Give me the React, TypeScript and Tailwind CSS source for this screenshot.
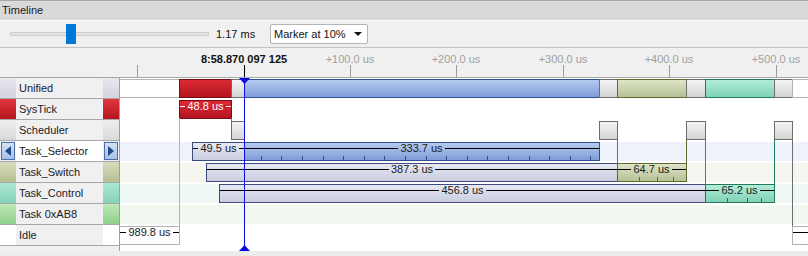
import type { ReactNode } from "react";

const X0 = 120; // chart area starts here (page x)

type Row = { name: string; swatch: string; cell?: string; arrows?: boolean; band?: string };

const ROWS: Row[] = [
  { name: "Unified", swatch: "bg-gradient-to-b from-[#e8e8ef] to-[#d3d3dd]" },
  { name: "SysTick", swatch: "bg-gradient-to-b from-[#e2353f] to-[#b5151e]" },
  { name: "Scheduler", swatch: "bg-gradient-to-b from-[#eeeeee] to-[#d9d9d9]" },
  { name: "Task_Selector", swatch: "bg-[#eef2fa]", cell: "bg-white", arrows: true, band: "bg-[#eef2fa]" },
  { name: "Task_Switch", swatch: "bg-gradient-to-b from-[#d7ddbd] to-[#b5bf93]", band: "bg-[#f5f6f0]" },
  { name: "Task_Control", swatch: "bg-gradient-to-b from-[#ade7d5] to-[#84d2b8]", band: "bg-[#eef8f4]" },
  { name: "Task 0xAB8", swatch: "bg-gradient-to-b from-[#bfe9b8] to-[#8fd08b]", band: "bg-[#f1f8ef]" },
  { name: "Idle", swatch: "bg-white" },
];

const C = {
  blue: "bg-gradient-to-b from-[#b6caee] to-[#7f9dd9] border-[#2f4f8f]",
  ready: "bg-gradient-to-b from-[#e7e8f1] to-[#c9cde0] border-[#3d4a7d]",
  red: "bg-gradient-to-b from-[#dd2a35] to-[#b3141f] border-[#7a0e16]",
  gray: "bg-gradient-to-b from-[#f4f4f4] to-[#d5d5d5] border-[#6e6e6e]",
  olive: "bg-gradient-to-b from-[#dee4c8] to-[#b6c195] border-[#5f6a2e]",
  teal: "bg-gradient-to-b from-[#b2edd9] to-[#80d2b6] border-[#1f7a5a]",
  idle: "bg-white border-[#b4b4b4]",
};

function Box({ l, r, cls }: { l: number; r: number; cls: string }) {
  return (
    <div
      className={`absolute top-[1px] h-[19px] border ${cls}`}
      style={{ left: l - X0, width: r - l + 1 }}
    />
  );
}

function Span({ l, r, text, white }: { l: number; r: number; text: string; white?: boolean }) {
  const line = white ? "bg-white" : "bg-black";
  return (
    <div
      className={`absolute top-[1px] flex h-[13px] items-center ${white ? "text-white" : "text-[#1a1a1a]"}`}
      style={{ left: l - X0, width: r - l }}
    >
      <div className={`h-px flex-1 ${line}`} />
      <span className="px-[2px] leading-[13px]">{text}</span>
      <div className={`h-px flex-1 ${line}`} />
    </div>
  );
}

function Ticks({ xs, cls }: { xs: number[]; cls: string }) {
  return (
    <>
      {xs.map((x) => (
        <div key={x} className={`absolute top-[15px] h-[4px] w-px ${cls}`} style={{ left: Math.round(x) - X0 }} />
      ))}
    </>
  );
}

function VLine({ x, y1, y2, cls }: { x: number; y1: number; y2: number; cls: string }) {
  return <div className={`absolute w-px ${cls}`} style={{ left: x - X0, top: y1, height: y2 - y1 }} />;
}

const blueTicks = Array.from({ length: 17 }, (_, i) => 260.7 + i * 20.6);

const rowContent: ReactNode[] = [
  <>
    <Box l={100} r={179} cls={C.idle} />
    <Box l={179} r={231} cls={C.red} />
    <Box l={231} r={244} cls={C.gray} />
    <Box l={244} r={599} cls={C.blue} />
    <Box l={599} r={617} cls={C.gray} />
    <Box l={617} r={686} cls={C.olive} />
    <Box l={686} r={705} cls={C.gray} />
    <Box l={705} r={774} cls={C.teal} />
    <Box l={774} r={792} cls={C.gray} />
    <Box l={792} r={830} cls={C.idle} />
  </>,
  <>
    <Box l={179} r={231} cls={C.red} />
    <Span l={180} r={231} text="48.8 us" white />
  </>,
  <>
    <Box l={231} r={244} cls={C.gray} />
    <Box l={599} r={617} cls={C.gray} />
    <Box l={686} r={705} cls={C.gray} />
    <Box l={774} r={792} cls={C.gray} />
  </>,
  <>
    <Box l={192} r={244} cls={C.ready} />
    <Box l={244} r={599} cls={C.blue} />
    <Ticks xs={blueTicks} cls="bg-[#2f4f8f]" />
    <Span l={193} r={244} text="49.5 us" />
    <Span l={244} r={599} text="333.7 us" />
  </>,
  <>
    <Box l={206} r={617} cls={C.ready} />
    <Box l={617} r={686} cls={C.olive} />
    <Ticks xs={[639, 657, 673]} cls="bg-[#5f6a2e]" />
    <Span l={207} r={617} text="387.3 us" />
    <Span l={617} r={686} text="64.7 us" />
  </>,
  <>
    <Box l={219} r={705} cls={C.ready} />
    <Box l={705} r={774} cls={C.teal} />
    <Ticks xs={[727, 747, 761]} cls="bg-[#1f7a5a]" />
    <Span l={220} r={705} text="456.8 us" />
    <Span l={705} r={774} text="65.2 us" />
  </>,
  null,
  <>
    <Box l={100} r={179} cls={C.idle} />
    <Span l={120} r={179} text="989.8 us" />
    <Box l={792} r={830} cls={C.idle} />
    <Span l={793} r={830} text="" />
  </>,
];

const rulerLabels = [
  { x: 350, t: "+100.0 us" },
  { x: 456, t: "+200.0 us" },
  { x: 563, t: "+300.0 us" },
  { x: 669, t: "+400.0 us" },
  { x: 776, t: "+500.0 us" },
];

function Arrow({ dir }: { dir: "l" | "r" }) {
  return (
    <div className="flex h-[18px] w-[14px] items-center justify-center border border-[#4a6fa8] bg-gradient-to-b from-[#d6e2f5] to-[#a9c0e6]">
      <svg width="6" height="10" viewBox="0 0 6 10">
        <path d={dir === "l" ? "M6 0 L0 5 L6 10 Z" : "M0 0 L6 5 L0 10 Z"} fill="#1f4a8f" />
      </svg>
    </div>
  );
}

export default function App() {
  return (
    <div className="h-[256px] w-[808px] overflow-hidden bg-[#f0f0f0] font-['Liberation_Sans',Arial,sans-serif] text-[11px] text-[#111]">
      {/* title */}
      <div className="h-[20px] border-t border-[#a6a6a6] bg-[#d9d9d9] pl-[2px] leading-[18px] text-[#1a1a1a]">
        Timeline
      </div>

      {/* toolbar */}
      <div className="flex h-[28px] items-center border-t border-b border-t-white border-b-[#c2c2c2]">
        <div className="w-[216px] pl-[10px]">
          <div className="relative h-[4px] w-[199px] border border-[#cfcfcf] bg-[#e4e4e4]">
            <div className="absolute left-[55px] top-1/2 h-[20px] w-[10px] -translate-y-1/2 bg-[#0078d7]" />
          </div>
        </div>
        <div className="w-[54px]">1.17 ms</div>
        <div className="flex h-[20px] w-[98px] items-center justify-between rounded-[2px] border border-[#b4b4b4] bg-white pl-[3px] pr-[5px]">
          <span>Marker at 10%</span>
          <svg width="8" height="4" viewBox="0 0 8 4">
            <path d="M0 0 L8 0 L4 4 Z" fill="#111" />
          </svg>
        </div>
      </div>

      {/* ruler */}
      <div className="relative h-[30px] border-b border-[#a8a8a8]">
        <div className="absolute left-[196px] top-[5px] w-[96px] text-center font-bold leading-[13px]">
          8:58.870 097 125
        </div>
        {rulerLabels.map((r) => (
          <div
            key={r.x}
            className="absolute top-[5px] w-[60px] -translate-x-1/2 text-center leading-[13px] text-[#a0a0a0]"
            style={{ left: r.x }}
          >
            {r.t}
          </div>
        ))}
        {[137, 350, 456, 563, 669, 776].map((x) => (
          <div key={x} className="absolute top-[17px] h-[12px] w-px bg-[#9a9a9a]" style={{ left: x }} />
        ))}
        <div className="absolute left-[244px] top-[17px] h-[12px] w-px bg-black" />
      </div>

      {/* rows */}
      <div className="flex h-[173px]">
        <div className="w-[120px] border-r border-[#a0a0a0]">
          {ROWS.map((r) => (
            <div key={r.name} className="flex h-[21px] border-b border-[#a8a8a8]">
              <div className={`flex w-[16px] items-center justify-center ${r.swatch}`}>
                {r.arrows && <Arrow dir="l" />}
              </div>
              <div className={`w-[87px] pl-[3px] leading-[20px] text-[#1a1a2a] ${r.cell ?? "bg-[#f0f0f0]"}`}>
                {r.name}
              </div>
              <div className={`flex w-[16px] items-center justify-center ${r.swatch}`}>
                {r.arrows && <Arrow dir="r" />}
              </div>
            </div>
          ))}
        </div>

        <div className="relative flex-1 overflow-hidden bg-white">
          {ROWS.map((r, i) => (
            <div key={r.name} className="relative h-[21px]">
              {r.band && <div className={`absolute inset-x-0 top-[1px] h-[19px] ${r.band}`} />}
              {rowContent[i]}
            </div>
          ))}

          {/* context switch connectors */}
          <VLine x={179} y1={40} y2={148} cls="bg-[#b4b4b4]" />
          <VLine x={231} y1={40} y2={43} cls="bg-[#6e6e6e]" />
          <VLine x={617} y1={61} y2={85} cls="bg-[#6e6e6e]" />
          <VLine x={686} y1={61} y2={85} cls="bg-[#5f6a2e]" />
          <VLine x={705} y1={61} y2={106} cls="bg-[#6e6e6e]" />
          <VLine x={774} y1={61} y2={106} cls="bg-[#1f7a5a]" />
          <VLine x={792} y1={61} y2={148} cls="bg-[#6e6e6e]" />

          {/* marker */}
          <div className="absolute left-[124px] top-0 h-[173px] w-px bg-[#0a0ae6]" />
          <svg className="absolute left-[119px] top-0" width="11" height="6" viewBox="0 0 11 6">
            <path d="M0 0 L11 0 L5.5 6 Z" fill="#0a0ae6" />
          </svg>
          <svg className="absolute left-[119px] top-[167px]" width="11" height="6" viewBox="0 0 11 6">
            <path d="M0 6 L11 6 L5.5 0 Z" fill="#0a0ae6" />
          </svg>
        </div>
      </div>

      <div className="h-[5px] bg-[#ececec]" />
    </div>
  );
}
